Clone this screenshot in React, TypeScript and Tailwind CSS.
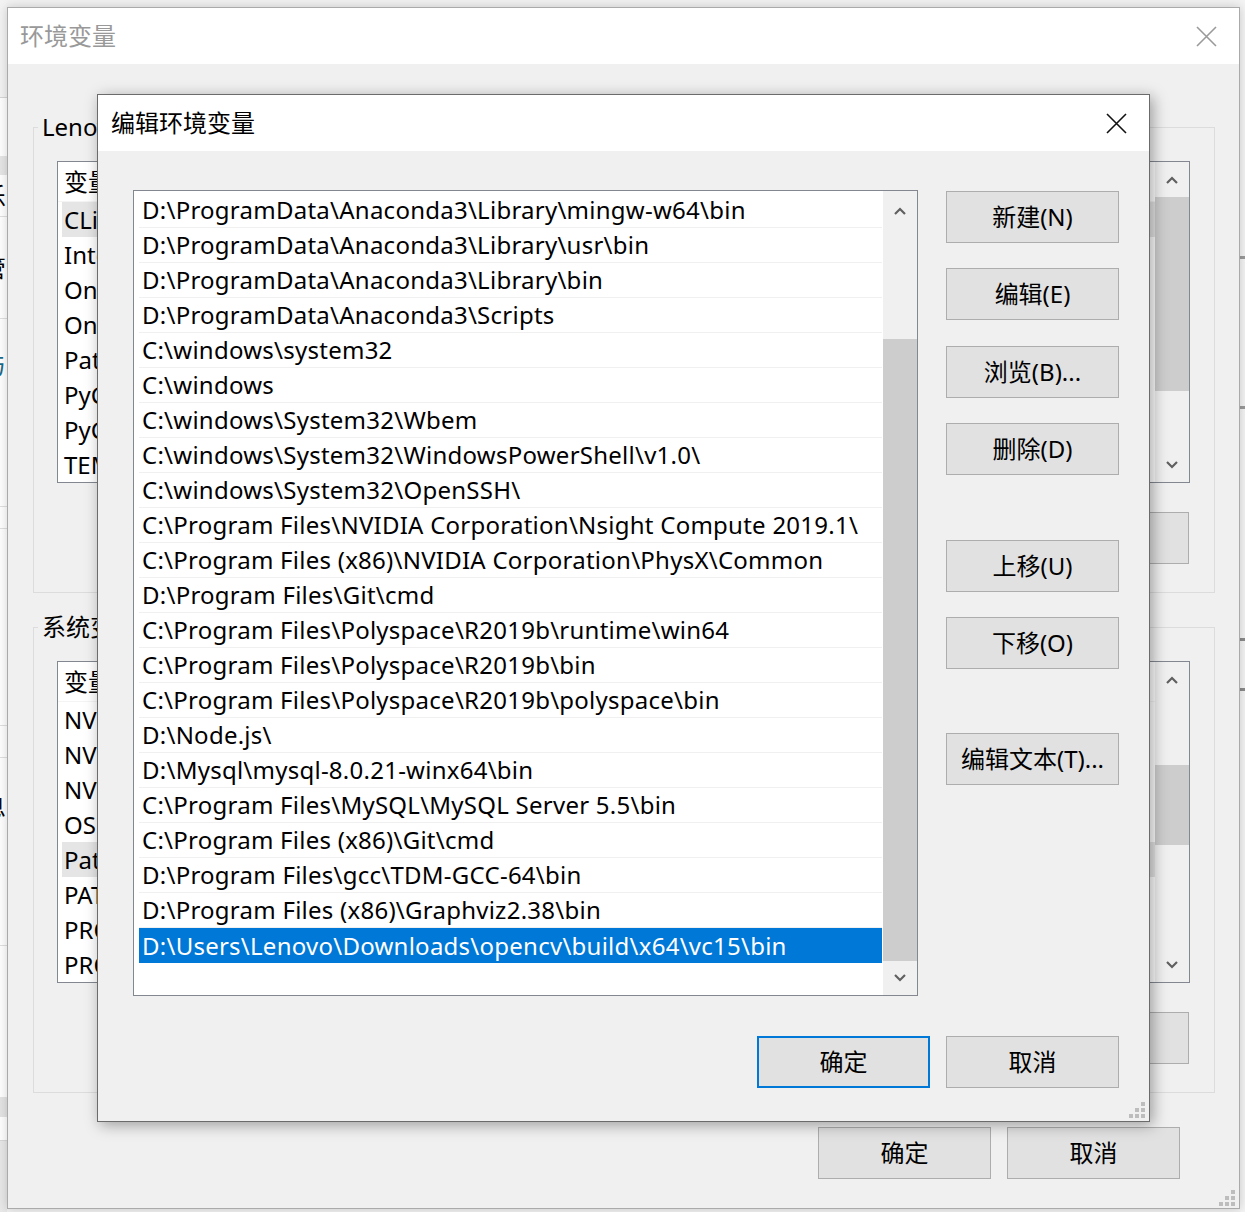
import React from "react";

const F = "font-['Noto_Sans','Noto_Sans_CJK_SC',sans-serif]";

const PATHS: string[] = [
  "D:\\ProgramData\\Anaconda3\\Library\\mingw-w64\\bin",
  "D:\\ProgramData\\Anaconda3\\Library\\usr\\bin",
  "D:\\ProgramData\\Anaconda3\\Library\\bin",
  "D:\\ProgramData\\Anaconda3\\Scripts",
  "C:\\windows\\system32",
  "C:\\windows",
  "C:\\windows\\System32\\Wbem",
  "C:\\windows\\System32\\WindowsPowerShell\\v1.0\\",
  "C:\\windows\\System32\\OpenSSH\\",
  "C:\\Program Files\\NVIDIA Corporation\\Nsight Compute 2019.1\\",
  "C:\\Program Files (x86)\\NVIDIA Corporation\\PhysX\\Common",
  "D:\\Program Files\\Git\\cmd",
  "C:\\Program Files\\Polyspace\\R2019b\\runtime\\win64",
  "C:\\Program Files\\Polyspace\\R2019b\\bin",
  "C:\\Program Files\\Polyspace\\R2019b\\polyspace\\bin",
  "D:\\Node.js\\",
  "D:\\Mysql\\mysql-8.0.21-winx64\\bin",
  "C:\\Program Files\\MySQL\\MySQL Server 5.5\\bin",
  "C:\\Program Files (x86)\\Git\\cmd",
  "D:\\Program Files\\gcc\\TDM-GCC-64\\bin",
  "D:\\Program Files (x86)\\Graphviz2.38\\bin",
  "D:\\Users\\Lenovo\\Downloads\\opencv\\build\\x64\\vc15\\bin",
];

const USER_VARS = [
  "CLion",
  "IntelliJ IDEA",
  "OneDrive",
  "OneDriveConsumer",
  "Path",
  "PyCharm",
  "PyCharm Community Edition",
  "TEMP",
];

const SYS_VARS = [
  "NVCUDASAMPLES_ROOT",
  "NVCUDASAMPLES10_1_ROOT",
  "NVTOOLSEXT_PATH",
  "OS",
  "Path",
  "PATHEXT",
  "PROCESSOR_ARCHITECTURE",
  "PROCESSOR_IDENTIFIER",
];

function XIcon({ color }: { color: string }) {
  return (
    <svg width="21" height="21" viewBox="0 0 21 21">
      <path d="M1 1 L20 20 M20 1 L1 20" stroke={color} strokeWidth="1.6" fill="none" />
    </svg>
  );
}

function Chevron({ up }: { up?: boolean }) {
  return (
    <svg width="12" height="8" viewBox="0 0 12 8">
      <polyline
        points={up ? "1,7 6,2 11,7" : "1,1 6,6 11,1"}
        fill="none"
        stroke="#606060"
        strokeWidth="2.2"
      />
    </svg>
  );
}

function Grip() {
  const cells = [0, 0, 1, 0, 1, 1, 1, 1, 1];
  return (
    <div className="grid grid-cols-[4px_4px_4px] gap-[2px]">
      {cells.map((v, i) => (
        <div key={i} className={v ? "w-[4px] h-[4px] bg-[#bdbdbd]" : "w-[4px] h-[4px]"} />
      ))}
    </div>
  );
}

function Btn({ children, primary }: { children: React.ReactNode; primary?: boolean }) {
  return (
    <div
      className={
        primary
          ? "w-[173px] h-[52px] shrink-0 flex items-center justify-center bg-[#e1e1e1] border-2 border-[#0078d7] text-[24px] text-black"
          : "w-[173px] h-[52px] shrink-0 flex items-center justify-center bg-[#e1e1e1] border border-[#adadad] text-[24px] text-black"
      }
    >
      {children}
    </div>
  );
}

function OuterList({
  names,
  selected,
  thumbTop,
  thumbH,
}: {
  names: string[];
  selected: number;
  thumbTop: string;
  thumbH: string;
}) {
  return (
    <div className="h-[322px] border border-[#828790] bg-white flex">
      <div className="flex-1 flex flex-col overflow-hidden">
        <div className="h-[40px] shrink-0 flex items-center pl-[6px] text-[24px] border-b border-[#f4f4f4]">
          <span className="w-[330px]">变量</span>
          <span>值</span>
        </div>
        {names.map((n, i) => (
          <div
            key={n}
            className={
              i === selected
                ? "h-[35px] shrink-0 ml-[4px] pl-[2px] flex items-center text-[24px] bg-[#e5e5e5] whitespace-nowrap"
                : "h-[35px] shrink-0 ml-[4px] pl-[2px] flex items-center text-[24px] whitespace-nowrap"
            }
          >
            {n}
          </div>
        ))}
      </div>
      <div className="w-[34px] bg-[#f0f0f0] flex flex-col">
        <div className="h-[35px] shrink-0 flex items-center justify-center">
          <Chevron up />
        </div>
        <div className="flex-1 flex flex-col">
          <div className={thumbTop} />
          <div className={thumbH + " bg-[#cdcdcd]"} />
        </div>
        <div className="h-[35px] shrink-0 flex items-center justify-center">
          <Chevron />
        </div>
      </div>
    </div>
  );
}

function GroupBox({
  label,
  names,
  selected,
  thumbTop,
  thumbH,
  buttons,
  className,
}: {
  label: string;
  names: string[];
  selected: number;
  thumbTop: string;
  thumbH: string;
  buttons: string[];
  className?: string;
}) {
  return (
    <div className={"relative border border-[#dcdcdc] pt-[33px] pl-[23px] pr-[24px] pb-[28px] " + (className ?? "")}>
      <div className="absolute left-[4px] top-[-18px] px-[4px] bg-[#f0f0f0] text-[24px] leading-[34px]">
        {label}
      </div>
      <OuterList names={names} selected={selected} thumbTop={thumbTop} thumbH={thumbH} />
      <div className="mt-[29px] flex justify-end gap-[16px] pr-[1px]">
        {buttons.map((b) => (
          <Btn key={b}>{b}</Btn>
        ))}
      </div>
    </div>
  );
}

function BackgroundStrip() {
  return (
    <div className="absolute left-0 top-0 w-[7px] h-[1212px] overflow-hidden flex flex-col bg-white text-[24px] text-black">
      <div className="h-[98px] shrink-0 bg-[#f3f3f3] border-b border-[#d6d6d6]" />
      <div className="h-[58px] shrink-0 bg-white" />
      <div className="h-[19px] shrink-0 bg-[#e6e6e6]" />
      <div className="h-[42px] shrink-0 flex items-center border-b border-[#e0e0e0]">
        <span className="ml-[-18px] whitespace-nowrap">乐</span>
      </div>
      <div className="h-[102px] shrink-0 flex items-center border-b border-[#e0e0e0]">
        <span className="ml-[-18px] whitespace-nowrap">管</span>
      </div>
      <div className="h-[92px] shrink-0 flex items-center">
        <span className="ml-[-18px] whitespace-nowrap text-[#1a6a8a]">与</span>
      </div>
      <div className="h-[96px] shrink-0 border-b border-[#e0e0e0]" />
      <div className="h-[22px] shrink-0 border-b border-[#e0e0e0]" />
      <div className="h-[197px] shrink-0 border-b border-[#e0e0e0]" />
      <div className="h-[32px] shrink-0 border-b border-[#e0e0e0]" />
      <div className="h-[98px] shrink-0 flex items-center">
        <span className="ml-[-18px] whitespace-nowrap">息</span>
      </div>
      <div className="h-[90px] shrink-0 border-b border-[#e0e0e0]" />
      <div className="h-[151px] shrink-0" />
      <div className="h-[20px] shrink-0 bg-[#e4e4e4]" />
      <div className="h-[24px] shrink-0 border-b border-[#d8d8d8]" />
      <div className="flex-1 bg-[#e8e8e8]" />
    </div>
  );
}

function RightStrip() {
  return (
    <div className="absolute right-0 top-0 w-[5px] h-[1212px] flex flex-col bg-[#f4f4f4]">
      <div className="h-[256px] shrink-0" />
      <div className="h-[3px] shrink-0 bg-[#9a9a9a]" />
      <div className="h-[147px] shrink-0" />
      <div className="h-[3px] shrink-0 bg-[#9a9a9a]" />
      <div className="h-[229px] shrink-0" />
      <div className="h-[3px] shrink-0 bg-[#8a8a8a]" />
      <div className="h-[47px] shrink-0" />
      <div className="h-[3px] shrink-0 bg-[#8a8a8a]" />
      <div className="flex-1" />
    </div>
  );
}

function OuterWindow() {
  return (
    <div className="absolute left-[7px] top-[7px] w-[1233px] h-[1202px] border border-[#aaaaaa] bg-[#f0f0f0] flex flex-col shadow-[0_0_10px_rgba(0,0,0,0.18)]">
      <div className="h-[56px] shrink-0 bg-white flex items-center justify-between pl-[12px] pr-[22px]">
        <span className="text-[24px] text-[#999999]">环境变量</span>
        <XIcon color="#9a9a9a" />
      </div>
      <div className="flex-1 flex flex-col pl-[25px] pr-[24px] pt-[63px]">
        <GroupBox
          label="Lenovo 的用户变量(U)"
          names={USER_VARS}
          selected={0}
          thumbTop="h-[0px]"
          thumbH="h-[194px]"
          buttons={["新建(N)...", "编辑(E)...", "删除(D)"]}
        />
        <GroupBox
          label="系统变量(S)"
          names={SYS_VARS}
          selected={4}
          thumbTop="h-[68px]"
          thumbH="h-[80px]"
          buttons={["新建(W)...", "编辑(I)...", "删除(L)"]}
          className="mt-[34px]"
        />
        <div className="mt-[34px] flex justify-end gap-[16px] pr-[35px]">
          <Btn>确定</Btn>
          <Btn>取消</Btn>
        </div>
        <div className="flex-1 flex items-end justify-end pr-[0px] pb-[2px] mr-[-20px]">
          <Grip />
        </div>
      </div>
    </div>
  );
}

function EditDialog() {
  return (
    <div className="absolute left-[97px] top-[94px] w-[1053px] h-[1028px] border border-[#6b6b6b] bg-[#f0f0f0] flex flex-col shadow-[3px_3px_14px_rgba(0,0,0,0.35)]">
      <div className="h-[56px] shrink-0 bg-white flex items-center justify-between pl-[13px] pr-[22px]">
        <span className="text-[24px] text-black">编辑环境变量</span>
        <XIcon color="#111111" />
      </div>
      <div className="flex-1 flex flex-col pl-[35px] pr-[30px] pt-[39px]">
        <div className="flex">
          <div className="w-[785px] h-[806px] border border-[#828790] bg-white flex">
            <div className="flex-1 flex flex-col pt-[2px] overflow-hidden">
              {PATHS.map((p, i) => (
                <div
                  key={p}
                  className={
                    i === PATHS.length - 1
                      ? "h-[35px] shrink-0 ml-[5px] mr-[1px] pl-[3px] flex items-center text-[24px] tracking-[0.25px] bg-[#0078d7] text-white whitespace-nowrap"
                      : "h-[35px] shrink-0 ml-[5px] mr-[1px] pl-[3px] flex items-center text-[24px] tracking-[0.25px] text-black border-b border-[#f0f0f0] whitespace-nowrap"
                  }
                >
                  {p}
                </div>
              ))}
            </div>
            <div className="w-[34px] bg-[#f0f0f0] flex flex-col">
              <div className="h-[40px] shrink-0 flex items-center justify-center">
                <Chevron up />
              </div>
              <div className="flex-1 flex flex-col">
                <div className="h-[108px] shrink-0" />
                <div className="flex-1 bg-[#cdcdcd]" />
              </div>
              <div className="h-[34px] shrink-0 flex items-center justify-center">
                <Chevron />
              </div>
            </div>
          </div>
          <div className="ml-[28px] flex flex-col pt-[1px]">
            <Btn>新建(N)</Btn>
            <div className="mt-[25px]">
              <Btn>编辑(E)</Btn>
            </div>
            <div className="mt-[26px]">
              <Btn>浏览(B)...</Btn>
            </div>
            <div className="mt-[25px]">
              <Btn>删除(D)</Btn>
            </div>
            <div className="mt-[65px]">
              <Btn>上移(U)</Btn>
            </div>
            <div className="mt-[25px]">
              <Btn>下移(O)</Btn>
            </div>
            <div className="mt-[64px]">
              <Btn>编辑文本(T)...</Btn>
            </div>
          </div>
        </div>
        <div className="mt-[40px] flex justify-end gap-[16px]">
          <Btn primary>确定</Btn>
          <Btn>取消</Btn>
        </div>
        <div className="flex-1 flex items-end justify-end mr-[-26px] pb-[3px]">
          <Grip />
        </div>
      </div>
    </div>
  );
}

export default function App() {
  return (
    <div className={"relative w-[1245px] h-[1212px] overflow-hidden bg-[#f2f2f2] " + F}>
      <BackgroundStrip />
      <RightStrip />
      <OuterWindow />
      <EditDialog />
    </div>
  );
}
